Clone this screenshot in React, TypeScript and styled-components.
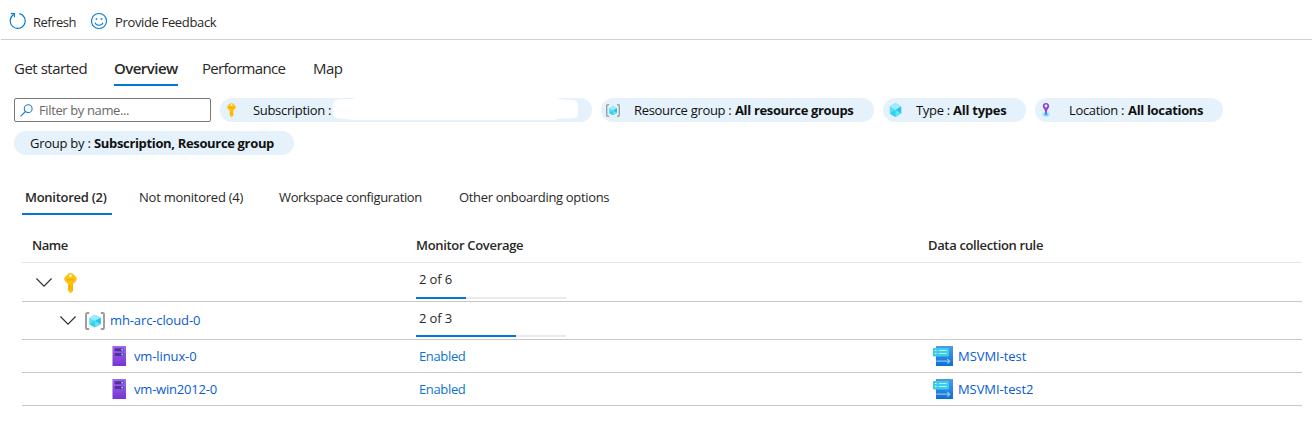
import React from 'react';
import styled, { createGlobalStyle } from 'styled-components';

const Global = createGlobalStyle`
  * { box-sizing: border-box; }
  body {
    margin: 0;
    background: #fff;
    color: #292827;
    font: 13px/18px "Open Sans", "Noto Sans", sans-serif;
  }
`;

const Page = styled.div`
  width: 1312px;
  height: 442px;
  overflow: hidden;
`;

const Label = styled.span<{ $track?: number; $bold?: boolean }>`
  white-space: nowrap;
  letter-spacing: ${p => p.$track ?? 0}px;
  font-weight: ${p => (p.$bold ? 700 : 'inherit')};
`;

const Toolbar = styled.header`
  display: flex;
  height: 40px;
  margin-left: 1px;
  padding: 12px 0 0 8px;
  border-bottom: 1px solid #cfcecd;
`;

const Command = styled.button<{ $width: number }>`
  display: flex;
  gap: 7px;
  align-items: flex-start;
  width: ${p => p.$width}px;
  padding: 0;
  border: 0;
  background: none;
  color: inherit;
  font: inherit;
  svg { flex: none; }
  span { margin-top: 1px; }
`;

const Tabs = styled.nav`
  display: flex;
  gap: 24px;
  height: 46px;
  padding: 19px 0 0 14px;
`;

const Tab = styled.a<{ $width: number; $active?: boolean }>`
  width: ${p => p.$width}px;
  height: 27px;
  font-size: 15px;
  line-height: 18px;
  font-weight: ${p => (p.$active ? 600 : 400)};
  border-bottom: ${p => (p.$active ? '2px solid #0078d4' : '0')};
`;

const Filters = styled.section`
  display: flex;
  flex-wrap: wrap;
  gap: 9px;
  padding: 12px 0 0 14px;
`;

const Search = styled.div`
  display: flex;
  align-items: center;
  gap: 6px;
  width: 197px;
  height: 24px;
  padding-left: 5px;
  border: 1px solid #7a7876;
  border-radius: 2px;
  color: #6a6866;
`;

const Pill = styled.div<{ $width: number; $iconLeft?: number }>`
  display: flex;
  align-items: center;
  width: ${p => p.$width}px;
  height: 24px;
  padding-left: ${p => p.$iconLeft ?? 16}px;
  border-radius: 12px;
  background: #e5f1fb;
  color: #111;
`;

const PillIcon = styled.span<{ $width: number }>`
  display: flex;
  flex: none;
  width: ${p => p.$width}px;
`;

const PillKey = styled(Label)<{ $width: number }>`
  flex: none;
  width: ${p => p.$width}px;
`;

const Blank = styled.span`
  display: flex;
  flex: none;
  height: 24px;
`;

const SubTabs = styled.nav`
  display: flex;
  height: 60px;
  padding: 33px 0 0 22px;
`;

const SubTab = styled.a<{ $width: number; $gap: number; $active?: boolean }>`
  width: ${p => p.$width}px;
  height: 27px;
  margin-right: ${p => p.$gap}px;
  padding-left: 3px;
  font-weight: ${p => (p.$active ? 600 : 400)};
  border-bottom: ${p => (p.$active ? '2px solid #0078d4' : '0')};
`;

const Table = styled.div`
  width: 1280px;
  margin: 0 0 0 22px;
`;

const Row = styled.div<{ $height: number; $head?: boolean }>`
  display: grid;
  grid-template-columns: 394px 512px 1fr;
  height: ${p => p.$height}px;
  font-weight: ${p => (p.$head ? 600 : 400)};
  border-bottom: 1px solid ${p => (p.$head ? '#e8e7e6' : '#c8c7c6')};
`;

const Cell = styled.div<{ $left?: number; $gap?: number; $top?: number }>`
  display: flex;
  align-items: center;
  gap: ${p => p.$gap ?? 8}px;
  padding-left: ${p => p.$left ?? 0}px;
  padding-top: ${p => p.$top ?? 0}px;
  svg { flex: none; }
`;

const Coverage = styled.div`
  display: flex;
  flex-direction: column;
  justify-content: space-between;
  width: 150px;
  padding: 7px 0 2px;
  span { padding-left: 3px; }
`;

const Track = styled.div`
  height: 2px;
  background: #eaeaea;
`;

const Fill = styled.div<{ $part: number }>`
  width: ${p => p.$part * 100}%;
  height: 2px;
  background: #0078d4;
`;

const Link = styled.a<{ $track?: number; $tone?: string; $raise?: number }>`
  margin-bottom: ${p => p.$raise ?? 0}px;
  color: ${p => p.$tone ?? '#0a5bd3'};
  letter-spacing: ${p => p.$track ?? 0}px;
  white-space: nowrap;
`;

const RefreshIcon = () => (
  <svg width="17" height="18" viewBox="0 0 17 18" fill="none" stroke="#0078d4" strokeWidth="1.15">
    <path d="M10.4 1.6A7.5 7.5 0 1 1 4.6 2.6" />
    <path d="M1.9 1.6H5.4V5.2" />
  </svg>
);

const SmileIcon = () => (
  <svg width="17" height="18" viewBox="0 0 17 18" fill="none" stroke="#0078d4" strokeWidth="1.1">
    <circle cx="8" cy="9" r="7.5" />
    <path d="M4.1 10.6C5 14.1 11 14.1 11.9 10.6" />
    <path d="M4.7 6.2h1.6v1.6H4.7zM9.7 6.2h1.6v1.6H9.7z" fill="#0078d4" stroke="none" />
  </svg>
);

const SearchIcon = () => (
  <svg width="13" height="13" viewBox="0 0 13 13" fill="none" stroke="#1a7fd0" strokeWidth="1.1">
    <circle cx="8.2" cy="4.7" r="3.9" />
    <path d="M5.4 7.5L.6 12.3" />
  </svg>
);

const KeyIcon = ({ w, h }: { w: number; h: number }) => (
  <svg width={w} height={h} viewBox="0 0 13 20">
    <path fill="#ffc20a" d="M4.2.7Q6.5-.5 8.8.7L12 4Q13.6 6.2 12 8L9 11V18L6.8 20H6.2L4 17.8V11L1 8Q-.6 6.2 1 4Z" />
    <path fill="#f5a300" d="M3 6.2h7v1.4H3zM5 12h1.2v5.2L5 16.3z" />
    <circle cx="6.5" cy="2.8" r="1.3" fill="#fff" />
    <path fill="#ffb300" d="M7.2 12H9v1.4L8 14.5l1 1v2l-1.8 1.6z" />
  </svg>
);

const CubeFaces = () => (
  <>
    <path fill="#50e0f8" d="M8 0L15 4V12L8 16L1 12V4Z" />
    <path fill="#9cebff" d="M8 0L15 4L8 8L1 4Z" />
    <path fill="#32bedd" d="M15 4V12L8 8Z" />
    <path fill="#60e4fa" d="M15 12L8 16V8Z" />
    <path fill="#32d0ee" d="M1 12L8 8V16Z" />
  </>
);

const CubeIcon = () => (
  <svg width="13" height="14" viewBox="0 0 16 16" preserveAspectRatio="none">
    <CubeFaces />
  </svg>
);

const GroupIcon = ({ w, h }: { w: number; h: number }) => (
  <svg width={w} height={h} viewBox="0 0 20 18" preserveAspectRatio="none">
    <path fill="none" stroke="#9b9b9b" strokeWidth="1.9" d="M4.2 1H2.6Q1 1 1 2.6V15.4Q1 17 2.6 17H4.2M15.8 1H17.4Q19 1 19 2.6V15.4Q19 17 17.4 17H15.8" />
    <svg x="3.5" y="2.6" width="13" height="13" viewBox="0 0 16 16">
      <CubeFaces />
    </svg>
  </svg>
);

const PinIcon = () => (
  <svg width="8" height="14" viewBox="0 0 8 14">
    <ellipse cx="4" cy="11.3" rx="3.8" ry="2.4" fill="#9cebff" />
    <ellipse cx="4" cy="11.4" rx="2" ry="1.2" fill="#50c8ee" />
    <path fill="#8a45dd" d="M4 0C6.2 0 7.4 1.6 7.2 3.5C7 5.2 5.2 6.3 5 8L4.6 11.5H3.4L3 8C2.8 6.3 1 5.2.8 3.5C.6 1.6 1.8 0 4 0Z" />
    <circle cx="4" cy="3" r="1.4" fill="#f0e4ff" />
  </svg>
);

const Chevron = () => (
  <svg width="16" height="9" viewBox="0 0 16 9" fill="none" stroke="#323130" strokeWidth="1.2">
    <path d="M.4.5L8 8.1L15.6.5" />
  </svg>
);

const ServerIcon = () => (
  <svg width="14" height="20" viewBox="0 0 14 20">
    <defs>
      <linearGradient id="server" x1="0" y1="0" x2="0" y2="1">
        <stop offset="0" stopColor="#a566ec" />
        <stop offset="1" stopColor="#7436d2" />
      </linearGradient>
    </defs>
    <rect width="14" height="20" rx=".5" fill="url(#server)" />
    <rect width="1" height="20" fill="#d9c5f3" opacity=".7" />
    <rect x="2.5" y="2.2" width="9.2" height="3" rx="1.2" fill="#552f99" />
    <rect x="2.5" y="6.9" width="9.2" height="3" rx="1.2" fill="#552f99" />
    <circle cx="10.2" cy="3.7" r="1" fill="#50e6ff" />
    <circle cx="10.2" cy="8.4" r="1" fill="#50e6ff" />
  </svg>
);

const RuleIcon = () => (
  <svg width="20" height="20" viewBox="0 0 20 20">
    <defs>
      <linearGradient id="rule" x1="0" y1="0" x2="0" y2="1">
        <stop offset="0" stopColor="#4f9bee" />
        <stop offset="1" stopColor="#0a72d3" />
      </linearGradient>
    </defs>
    <rect x="3" width="17" height="20" fill="url(#rule)" />
    <rect y="2" width="16" height="8.4" rx=".4" fill="#3ccbe9" />
    <path stroke="#dcfaff" strokeWidth=".8" d="M6 4.5H13.6M6 7.5H13.6" />
    <path fill="#dcfaff" d="M2 4h1.6v1H2zM2 7h1.6v1H2z" />
    <path fill="none" stroke="#8fc2f7" strokeWidth="1.3" d="M3.3 15.2H16.4M14.3 12.9L16.7 15.2L14.3 17.5" />
  </svg>
);

const machines = [
  { name: 'vm-linux-0', track: -0.12, rule: 'MSVMI-test', ruleTrack: -0.05 },
  { name: 'vm-win2012-0', track: -0.2, rule: 'MSVMI-test2', ruleTrack: -0.08 },
];

export default function App() {
  return (
    <Page>
      <Global />
      <Toolbar>
        <Command $width={82}>
          <RefreshIcon />
          <Label $track={-0.52}>Refresh</Label>
        </Command>
        <Command $width={130}>
          <SmileIcon />
          <Label $track={-0.35}>Provide Feedback</Label>
        </Command>
      </Toolbar>

      <Tabs>
        <Tab $width={76}><Label $track={-0.48}>Get started</Label></Tab>
        <Tab $width={64} $active><Label $track={-0.53}>Overview</Label></Tab>
        <Tab $width={87}><Label $track={-0.7}>Performance</Label></Tab>
        <Tab $width={32}><Label $track={-0.5}>Map</Label></Tab>
      </Tabs>

      <Filters>
        <Search>
          <SearchIcon />
          <Label $track={-0.38}>Filter by name...</Label>
        </Search>
        <Pill $width={372} $iconLeft={7}>
          <PillIcon $width={26}><KeyIcon w={9} h={14} /></PillIcon>
          <PillKey $width={79} $track={-0.32}>Subscription :</PillKey>
          <Blank>
            <svg width="247" height="24" viewBox="0 0 247 24">
              <path fill="#fff" d="M22 0V1H8Q1 2 1 7V16Q1 20 7 20.5L22 22H223L228 20.5H239Q246 20 246 17V8Q246 2 240 2L226 1V0Z" />
            </svg>
          </Blank>
        </Pill>
        <Pill $width={273} $iconLeft={5}>
          <PillIcon $width={28}><GroupIcon w={14} h={13} /></PillIcon>
          <PillKey $width={101} $track={-0.32}>Resource group :</PillKey>
          <Label $bold $track={-0.35}>All resource groups</Label>
        </Pill>
        <Pill $width={143} $iconLeft={6}>
          <PillIcon $width={27}><CubeIcon /></PillIcon>
          <PillKey $width={37} $track={-0.3}>Type :</PillKey>
          <Label $bold $track={-0.25}>All types</Label>
        </Pill>
        <Pill $width={188} $iconLeft={7}>
          <PillIcon $width={27}><PinIcon /></PillIcon>
          <PillKey $width={59} $track={-0.35}>Location :</PillKey>
          <Label $bold $track={-0.33}>All locations</Label>
        </Pill>
        <Pill $width={280} $iconLeft={16}>
          <PillKey $width={64} $track={-0.26}>Group by :</PillKey>
          <Label $bold $track={-0.34}>Subscription, Resource group</Label>
        </Pill>
      </Filters>

      <SubTabs>
        <SubTab $width={90} $gap={24} $active><Label $track={-0.27}>Monitored (2)</Label></SubTab>
        <SubTab $width={108} $gap={32}><Label $track={-0.24}>Not monitored (4)</Label></SubTab>
        <SubTab $width={148} $gap={32}><Label $track={-0.36}>Workspace configuration</Label></SubTab>
        <SubTab $width={156} $gap={0}><Label $track={-0.33}>Other onboarding options</Label></SubTab>
      </SubTabs>

      <Table>
        <Row $height={48} $head>
          <Cell $left={10} $top={12}><Label $track={-0.5}>Name</Label></Cell>
          <Cell $top={12}><Label $track={-0.32}>Monitor Coverage</Label></Cell>
          <Cell $top={12}><Label $track={-0.35}>Data collection rule</Label></Cell>
        </Row>
        <Row $height={39}>
          <Cell $left={14} $gap={12} $top={1}>
            <Chevron />
            <KeyIcon w={13} h={20} />
          </Cell>
          <Coverage>
            <Label $track={-0.15}>2 of 6</Label>
            <Track><Fill $part={2 / 6} /></Track>
          </Coverage>
          <Cell />
        </Row>
        <Row $height={38}>
          <Cell $left={38} $gap={9}>
            <Chevron />
            <Cell $gap={5}>
              <GroupIcon w={20} h={18} />
              <Link $track={-0.12} $raise={2}>mh-arc-cloud-0</Link>
            </Cell>
          </Cell>
          <Coverage>
            <Label $track={-0.15}>2 of 3</Label>
            <Track><Fill $part={2 / 3} /></Track>
          </Coverage>
          <Cell />
        </Row>
        {machines.map(m => (
          <Row key={m.name} $height={33}>
            <Cell $left={90}>
              <ServerIcon />
              <Link $track={m.track}>{m.name}</Link>
            </Cell>
            <Cell $left={3}><Link $tone="#0a74d1" $track={-0.35}>Enabled</Link></Cell>
            <Cell $left={5} $gap={5}>
              <RuleIcon />
              <Link $track={m.ruleTrack}>{m.rule}</Link>
            </Cell>
          </Row>
        ))}
      </Table>
    </Page>
  );
}
